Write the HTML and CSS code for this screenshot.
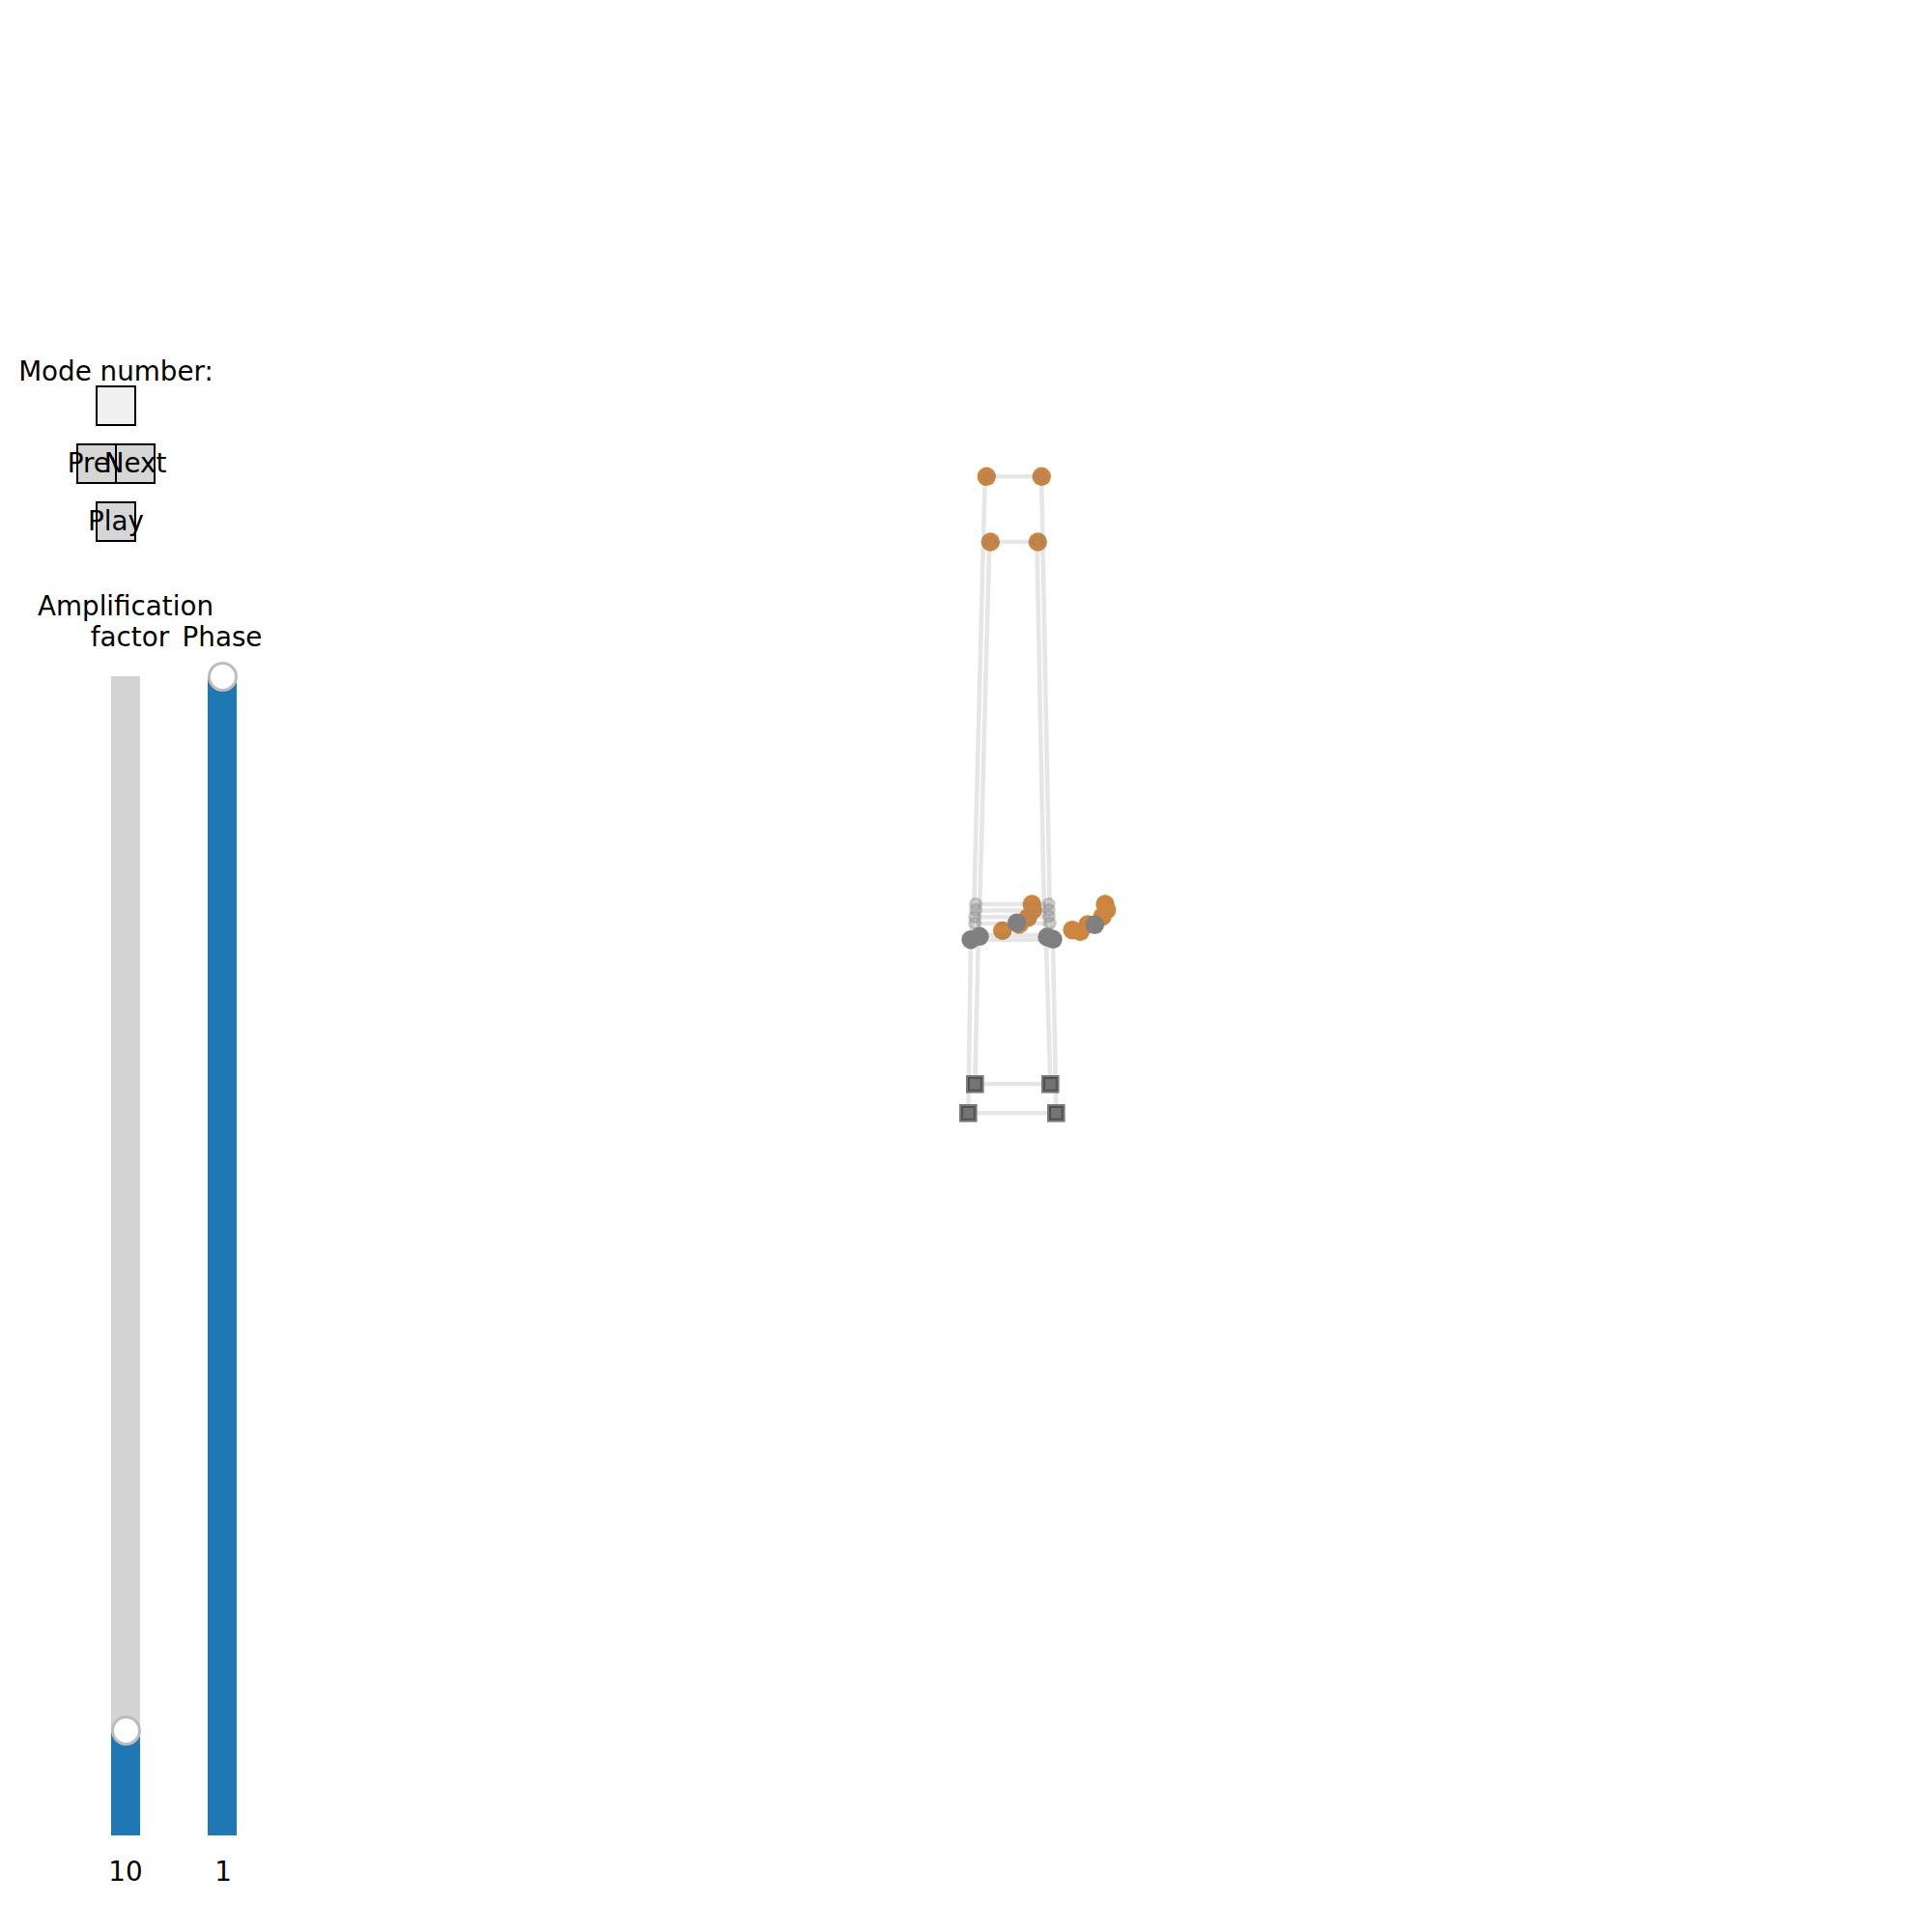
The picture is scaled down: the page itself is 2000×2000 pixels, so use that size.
FILE: index.html
```html
<!DOCTYPE html>
<html>
<head>
<meta charset="utf-8">
<title>Mode shapes</title>
<link rel="stylesheet" href="styles.css">
</head>
<body>
<div class="figure">

	<div class="panel">
		<div class="mode">
			<div class="label">Mode number:</div>
			<div class="box"></div>
			<div class="btn-row">
				<div class="btn">Prev</div>
				<div class="btn">Next</div>
			</div>
			<div class="btn">Play</div>
		</div>

		<div class="sliders">
			<div class="slider">
				<div class="slider-label">
					<span>Amplification</span>
					<span class="shift">factor</span>
				</div>
				<div class="track">
					<div class="fill" style="height: 9.1%"><div class="knob"></div></div>
				</div>
				<div class="value">10</div>
			</div>
			<div class="slider">
				<div class="slider-label">
					<span>Phase</span>
				</div>
				<div class="track">
					<div class="fill" style="height: 100%"><div class="knob"></div></div>
				</div>
				<div class="value">1</div>
			</div>
		</div>
	</div>

	<svg class="plot" viewBox="300 0 1700 2000" width="1700" height="2000">
		<!-- deformed nodes -->
		<g class="deformed">
			<circle cx="1021.3" cy="493.3" r="9.7"/>
			<circle cx="1078.3" cy="493.3" r="9.7"/>
			<circle cx="1025.3" cy="561" r="9.7"/>
			<circle cx="1074.3" cy="561" r="9.7"/>
			<circle cx="1068.3" cy="936" r="9.7"/>
			<circle cx="1069.3" cy="942" r="9.7"/>
			<circle cx="1064" cy="950" r="9.7"/>
			<circle cx="1055" cy="957" r="9.7"/>
			<circle cx="1037.7" cy="963.5" r="9.7"/>
			<circle cx="1144" cy="936" r="9.7"/>
			<circle cx="1145.7" cy="942" r="9.7"/>
			<circle cx="1141" cy="949" r="9.7"/>
			<circle cx="1126" cy="957" r="9.7"/>
			<circle cx="1118.3" cy="964.5" r="9.7"/>
			<circle cx="1110" cy="962.7" r="9.7"/>
		</g>

		<!-- members -->
		<g class="members">
			<line x1="1026" y1="493.3" x2="1073" y2="493.3"/>
			<line x1="1030" y1="561" x2="1069.5" y2="561"/>
			<line x1="1010" y1="936" x2="1086" y2="936"/>
			<line x1="1010" y1="942.5" x2="1086" y2="942.5"/>
			<line x1="1010" y1="949.3" x2="1086" y2="949.3"/>
			<line x1="1010" y1="956" x2="1086" y2="956"/>
			<line x1="1014" y1="968" x2="1084" y2="968"/>
			<line x1="1005" y1="972.7" x2="1090" y2="972.7"/>
			<line x1="1009.3" y1="1122.3" x2="1087.3" y2="1122.3"/>
			<line x1="1002.3" y1="1152.3" x2="1093.3" y2="1152.3"/>
			<polyline points="1019.5,500 1008.3,936 1005,972.7 1002.3,1152.3"/>
			<polyline points="1024,568 1014.3,936 1012.5,985 1009.3,1122.3"/>
			<polyline points="1078.2,500 1086.7,936 1090,972.7 1093.3,1152.3"/>
			<polyline points="1073.5,568 1080.7,936 1083.3,985 1087.3,1122.3"/>
		</g>

		<!-- undeformed nodes -->
		<g class="rings-faint">
			<circle cx="1021.3" cy="493.3" r="5"/>
			<circle cx="1078.3" cy="493.3" r="5"/>
			<circle cx="1025.3" cy="561" r="5"/>
			<circle cx="1074.3" cy="561" r="5"/>
		</g>
		<g class="rings">
			<circle cx="1010" cy="935.7" r="5.5"/>
			<circle cx="1010" cy="942" r="5.5"/>
			<circle cx="1009" cy="949" r="5.5"/>
			<circle cx="1009" cy="955.7" r="5.5"/>
			<circle cx="1085.7" cy="935.7" r="5.5"/>
			<circle cx="1086" cy="942" r="5.5"/>
			<circle cx="1086" cy="948.5" r="5.5"/>
			<circle cx="1087" cy="955.5" r="5.5"/>
		</g>

		<g class="nodes">
			<circle cx="1005" cy="972.7" r="9.7"/>
			<circle cx="1014" cy="969.3" r="9.7"/>
			<circle cx="1052.7" cy="955.3" r="9.7"/>
			<circle cx="1084" cy="970" r="9.7"/>
			<circle cx="1090" cy="972.3" r="9.7"/>
			<circle cx="1133.3" cy="957.3" r="9.7"/>
		</g>

		<!-- supports -->
		<g class="supports">
			<rect x="1001" y="1114" width="16.6" height="16.6"/>
			<rect x="1079" y="1114" width="16.6" height="16.6"/>
			<rect x="994" y="1144" width="16.6" height="16.6"/>
			<rect x="1085" y="1144" width="16.6" height="16.6"/>
		</g>
		<g class="support-inner">
			<rect x="1003" y="1116" width="12.6" height="12.6"/>
			<rect x="1081" y="1116" width="12.6" height="12.6"/>
			<rect x="996" y="1146" width="12.6" height="12.6"/>
			<rect x="1087" y="1146" width="12.6" height="12.6"/>
		</g>
		<g class="support-pin">
			<circle cx="1009.3" cy="1122.3" r="5"/>
			<circle cx="1087.3" cy="1122.3" r="5"/>
			<circle cx="1002.3" cy="1152.3" r="5"/>
			<circle cx="1093.3" cy="1152.3" r="5"/>
		</g>
	</svg>

</div>
</body>
</html>
```

FILE: styles.css
```css
body{
	margin: 0;
	background: #fff;
	color: #000;
	font-family: "DejaVu Sans", sans-serif;
	font-size: 27.78px;
	line-height: 32px;
}

.figure{
	display: flex;
	width: 2000px;
	height: 2000px;
}

.panel{
	display: flex;
	flex-direction: column;
	flex: 0 0 300px;
	padding-top: 369px;
	box-sizing: border-box;
}

.mode{
	display: flex;
	flex-direction: column;
	align-items: center;
	gap: 18px;
	width: 240px;
}

.label{
	margin-bottom: -20px;
	white-space: nowrap;
}

.box,
.btn{
	display: flex;
	align-items: center;
	justify-content: center;
	box-sizing: border-box;
	width: 42px;
	height: 42px;
	border: solid 2px #000;
	white-space: nowrap;
}

.box{
	background: #f0f0f0;
}

.btn{
	background: #d6d6d6;
}

.btn-row{
	display: flex;
}

.btn-row .btn + .btn{
	margin-left: -2px;
}

.sliders{
	display: flex;
	margin-top: 51px;
	padding-left: 80px;
}

.slider{
	display: flex;
	flex-direction: column;
	align-items: center;
	width: 100px;
}

.slider-label{
	display: flex;
	flex-direction: column;
	justify-content: flex-end;
	align-items: center;
	height: 64px;
	margin-bottom: 24px;
	white-space: nowrap;
}

.shift{
	padding-left: 9px;
}

.track{
	display: flex;
	flex-direction: column;
	justify-content: flex-end;
	width: 30px;
	height: 1200px;
	background: #d3d3d3;
}

.fill{
	position: relative;
	background: #1f77b4;
}

.knob{
	position: absolute;
	top: -15px;
	left: -0.5px;
	box-sizing: border-box;
	width: 31px;
	height: 31px;
	border: solid 3px #bdbdbd;
	border-radius: 50%;
	background: #fff;
}

.value{
	margin-top: 22px;
}

.slider + .slider .value{
	padding-left: 2px;
}

.plot{
	flex: 0 0 1700px;
}

.deformed{
	fill: #cd853f;
}

.members{
	fill: none;
	stroke: #808080;
	stroke-opacity: 0.2;
	stroke-width: 4.6;
}

.rings{
	fill: #808080;
	fill-opacity: 0.25;
	stroke: #808080;
	stroke-opacity: 0.35;
	stroke-width: 3;
}

.rings-faint{
	fill: #808080;
	fill-opacity: 0.12;
	stroke: #808080;
	stroke-opacity: 0.18;
	stroke-width: 2;
}

.nodes{
	fill: #808080;
}

.supports{
	fill: #777;
	stroke: #7a7a7a;
	stroke-width: 2;
}

.support-inner{
	fill: #7a7a7a;
	stroke: #505050;
	stroke-width: 2;
}

.support-pin{
	fill: #747474;
	stroke: #707070;
}
```
